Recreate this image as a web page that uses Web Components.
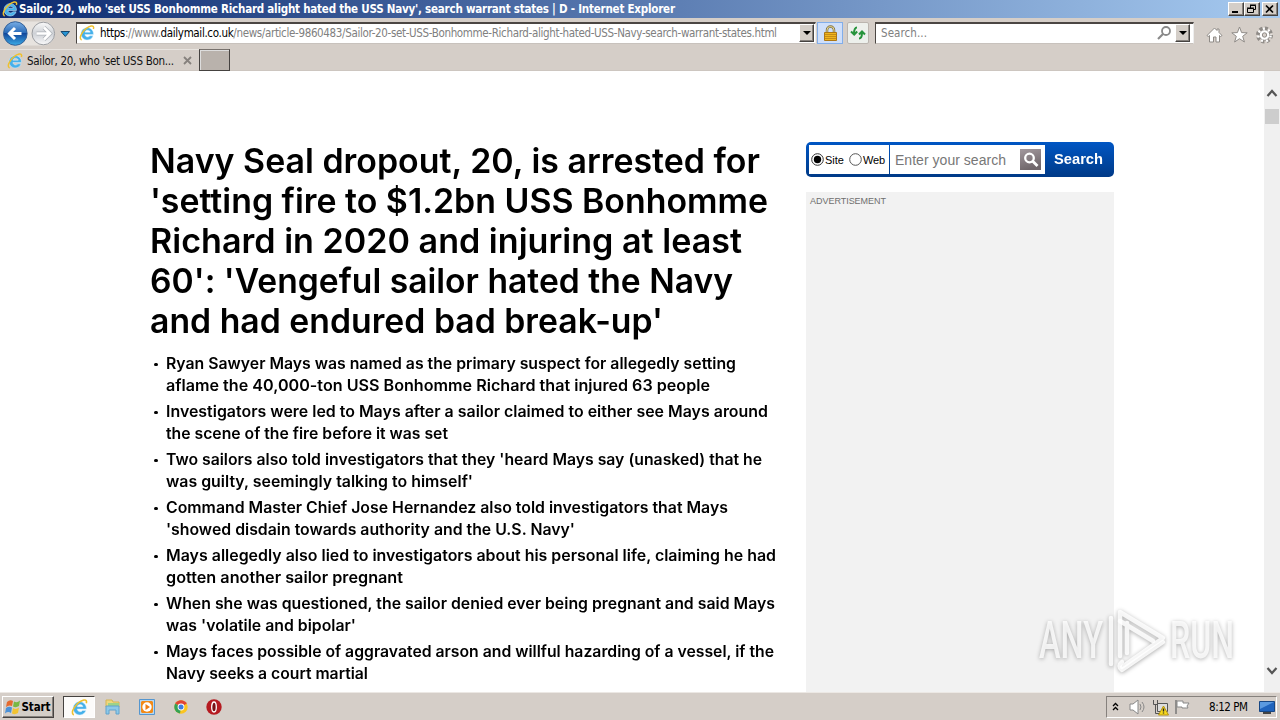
<!DOCTYPE html>
<html lang="en">
<head>
<meta charset="utf-8">
<title>Sailor, 20 - Internet Explorer</title>
<style>
html,body{margin:0;width:1280px;height:720px;overflow:hidden;background:#fff}
</style>
</head>
<body>
<ie-desktop></ie-desktop>
<script>
const UI = '"DejaVu Sans Condensed","DejaVu Sans",sans-serif';
function define(name, css, html, after) {
  const t = document.createElement('template');
  t.innerHTML = `<style>*{box-sizing:border-box}${css}</style>${html}`;
  customElements.define(name, class extends HTMLElement {
    constructor() {
      super();
      this.attachShadow({mode: 'open'}).append(t.content.cloneNode(true));
    }
    connectedCallback() { if (after) after(this); }
  });
}

/* one line of text tracked (or scaled) to a fixed measure */
define('fit-text', ':host{display:block;white-space:nowrap}span{display:inline-block;transform-origin:0 50%}', '<span><slot></slot></span>', el => {
  const s = el.shadowRoot.querySelector('span');
  const w = +el.getAttribute('w'), n = el.textContent.length;
  const nat = s.getBoundingClientRect().width;
  if (!w || !nat) return;
  if (el.hasAttribute('scale')) s.style.transform = `scaleX(${w / nat})`;
  else s.style.letterSpacing = ((w - nat) / (n - 1)) + 'px';
});

define('ie-logo', ':host{display:block;width:16px;height:16px}svg{display:block;width:100%;height:100%;overflow:visible}', `
<svg viewBox="0 0 16 16"><path fill-rule="evenodd" d="M14.4 9.500H5.900c.3 2.700 3.600 3.200 5 1.300h3.200A6.200 6.200 0 1 1 14.400 9.500zM6 7.200h5.200c-.4-2.600-4.700-2.700-5.200 0z" fill="#45b0ea" stroke="#d8effc" stroke-width=".5"/><path d="M2.600 15C-1.800 13 5.600 2.600 12.100 1c2.300-.4 3 1 2.300 3" fill="none" stroke="#efc02e" stroke-width="1.500"/></svg>`);

define('win-button', `:host{display:flex;align-items:center;justify-content:center;background:#d4cec8;border:1px solid;border-color:#fff #454240 #454240 #fff;box-shadow:inset -1px -1px #86817d}svg{display:block}`, '<slot></slot>');

define('title-bar', `:host{display:flex;height:18px;align-items:center;padding:0 2px 0 2px;background:linear-gradient(90deg,#0c2a70,#a6caf0);color:#fff;font:bold 11.500px/18px ${UI}}
ie-logo{margin-right:1px}fit-text{flex:1}.b{display:flex}win-button{width:16px;height:14px}.c{margin-left:2px}`, `
<ie-logo></ie-logo><fit-text w="656">Sailor, 20, who 'set USS Bonhomme Richard alight hated the USS Navy', search warrant states | D - Internet Explorer</fit-text>
<div class="b"><win-button><svg width="12" height="10"><path d="M2 8h6" stroke="#000" stroke-width="2"/></svg></win-button>
<win-button><svg width="12" height="10" fill="none" stroke="#000"><path d="M4 1h6M4 1.500h5.500v4H8M4.500 1v3M1.500 4.500h6v4h-6zM1 4h7"/></svg></win-button>
<win-button class="c"><svg width="12" height="10"><path d="M2 1.500l7 7M9 1.500l-7 7" stroke="#000" stroke-width="1.700"/></svg></win-button></div>`);

define('address-bar', `:host{display:flex;height:31px;padding:4px 0 0 3px;background:#d5cec8;font:11.500px/19px ${UI};color:#808080}
.nav{display:block;margin-top:-2px}.f{display:flex;height:22px;background:#fff;border:1px solid #eee;border-top:2px solid #4b4643;border-left:1px solid #4b4643;border-bottom-color:#c8c2bd}
.u{width:740px;margin-left:0}.u ie-logo{margin:1px 5px 0 2px}.u fit-text{flex:1}.f win-button{width:15px;height:18px}
.u win-button{margin-right:1px}b{font-weight:400;color:#000}.lock,.ref{display:grid;place-items:center;height:22px;margin-left:1px}
.lock{width:26px;background:#cfdffa;border:1px solid #82aeea}.ref{width:22px;margin-left:4px;background:#edf0ec;border:1px solid #bbb5af;border-radius:2px}
.s{width:319px;margin-left:6px;padding-left:5px}.s fit-text{flex:1}.s win-button{margin:0 3px 0 1px}.s>svg{margin-right:0;position:relative;left:-2px}.ico{display:flex;gap:8px;margin:4px 0 0 12px}`, `
<svg class="nav" width="73" height="28"><defs><linearGradient id="g" x2="0" y2="1"><stop stop-color="#78aee5"/><stop offset=".48" stop-color="#2869b7"/><stop offset=".5" stop-color="#12479b"/><stop offset="1" stop-color="#3bace7"/></linearGradient><linearGradient id="h" x2="0" y2="1"><stop stop-color="#fafafa"/><stop offset=".5" stop-color="#ced1d6"/><stop offset="1" stop-color="#f9f9fa"/></linearGradient></defs>
<path d="M12 1.500h28a12 12 0 0 1 0 24H12" fill="#e7e3df"/><circle cx="12.300" cy="13.500" r="11.800" fill="url(#g)" stroke="#315f98"/><circle cx="40.300" cy="13.500" r="11.300" fill="url(#h)" stroke="#9b9da1"/>
<path d="M18.500 13.500H8M12 8l-5.500 5.500L12 19" fill="none" stroke="#fff" stroke-width="3"/><path d="M33.500 13.500h12M41 7.500l6 6-6 6" fill="none" stroke="#aeb2b8" stroke-width="4"/><path d="M33.500 13.500h12M41 7.500l6 6-6 6" fill="none" stroke="#fff" stroke-width="2.600"/><path d="M58 11.500h8.500l-4.200 5z" fill="#2694d3" stroke="#16466d"/></svg>
<div class="f u"><ie-logo></ie-logo><fit-text w="677"><b>https</b>://www.<b>dailymail.co.uk</b>/news/article-9860483/Sailor-20-set-USS-Bonhomme-Richard-alight-hated-USS-Navy-search-warrant-states.html</fit-text><win-button><svg width="8" height="5"><path d="M0 0h8L4 4z"/></svg></win-button></div>
<div class="lock"><svg width="15" height="17"><path d="M4 8V5a3.500 3.500 0 0 1 7 0v3" fill="none" stroke="#7e7148" stroke-width="2.500"/><path d="M4 8V5a3.500 3.500 0 0 1 7 0v3" fill="none" stroke="#ead98d"/><path d="M1.500 7.500h12v8h-12z" fill="#f1b61d" stroke="#ad7714"/><path d="M2 9.500h11M2 11.500h11M2 13.500h11" stroke="#c68c17"/></svg></div>
<div class="ref"><svg width="16" height="14" fill="none" stroke="#26943c" stroke-width="2"><path d="M7 1.500Q4 1.500 4 8M1 5.500l3.200 3 3-3M9 12.500q3 0 3-6M9 8.500l3-3 3 3"/></svg></div>
<div class="f s"><fit-text w="46">Search...</fit-text><svg width="15" height="18"><circle cx="9" cy="7" r="4" fill="none" stroke="#898989" stroke-width="1.800"/><path d="M6 10l-5 5" stroke="#898989" stroke-width="2.200"/></svg><win-button><svg width="8" height="5"><path d="M0 0h8L4 4z"/></svg></win-button></div>
<div class="ico"><svg width="17" height="18" fill="#fff" stroke="#8f8b87"><path d="M1 9.500L8.500 2l2.500 2.500V3h2v3.500l3 3-1.500 1-1-1v6.500h-3.500v-5H7.500v5H3.500V9.500l-1.200 1z"/></svg>
<svg width="17" height="18" fill="#fff" stroke="#8f8b87"><path d="M8.500 1l2.100 5.600 5.600.2-4.500 3.500 1.700 5.700-4.900-3.300L3.600 16l1.700-5.700L.8 6.800l5.600-.2z"/></svg>
<svg width="17" height="18"><g transform="translate(8.500 9)"><circle r="6.700" fill="none" stroke="#8f8b87" stroke-width="3.600" stroke-dasharray="3.100 2.162"/><circle r="5.300" fill="#fff" stroke="#8f8b87"/><circle r="6.200" fill="none" stroke="#fff" stroke-width="2.400" stroke-dasharray="1.900 3.362" stroke-dashoffset="-.6"/><circle r="2.200" fill="#d5cec8" stroke="#8f8b87"/></g></svg></div>`);

define('tab-strip', `:host{display:flex;height:22px;background:#d5cec8;font:11.500px/22px ${UI};color:#111;border-bottom:1px solid #cdc6c0}
.t{display:flex;width:199px;padding:0 0 0 7px;border-top:1px solid #e8e4e0}ie-logo{margin:3px 4px 0 0}fit-text{width:156px}svg{margin-top:6px}.n{width:31px;height:22px;background:#b9b2ac;border:1px solid #454240;border-top-color:#77716d;box-shadow:inset 1px 1px #ddd}`, `
<div class="t"><ie-logo></ie-logo><fit-text w="147">Sailor, 20, who 'set USS Bon...</fit-text><svg width="9" height="9"><path d="M1 1l7 7M8 1l-7 7" stroke="#86817d" stroke-width="1.800"/></svg></div><div class="n"></div>`);

define('article-head', `:host{display:block;width:640px;color:#000;font-family:Inter,sans-serif;font-weight:600}h1{margin:0 0 12px;font-size:34px;line-height:40px;font-weight:600}
.p{font-size:15.500px;line-height:22px;margin-bottom:4px;padding-left:16px;position:relative}.p::before{content:"";position:absolute;left:4px;top:9.500px;width:3.500px;height:3.500px;border-radius:50%;background:#000}`, `
<h1><fit-text scale w="610">Navy Seal dropout, 20, is arrested for</fit-text><fit-text scale w="618">'setting fire to $1.2bn USS Bonhomme</fit-text><fit-text scale w="592">Richard in 2020 and injuring at least</fit-text><fit-text scale w="583">60': 'Vengeful sailor hated the Navy</fit-text><fit-text scale w="513">and had endured bad break-up'</fit-text></h1>
<div class="p"><fit-text scale w="570">Ryan Sawyer Mays was named as the primary suspect for allegedly setting</fit-text><fit-text scale w="544">aflame the 40,000-ton USS Bonhomme Richard that injured 63 people</fit-text></div>
<div class="p"><fit-text scale w="602">Investigators were led to Mays after a sailor claimed to either see Mays around</fit-text><fit-text scale w="282">the scene of the fire before it was set</fit-text></div>
<div class="p"><fit-text scale w="596">Two sailors also told investigators that they 'heard Mays say (unasked) that he</fit-text><fit-text scale w="307">was guilty, seemingly talking to himself'</fit-text></div>
<div class="p"><fit-text scale w="562">Command Master Chief Jose Hernandez also told investigators that Mays</fit-text><fit-text scale w="409">'showed disdain towards authority and the U.S. Navy'</fit-text></div>
<div class="p"><fit-text scale w="610">Mays allegedly also lied to investigators about his personal life, claiming he had</fit-text><fit-text scale w="237">gotten another sailor pregnant</fit-text></div>
<div class="p"><fit-text scale w="609">When she was questioned, the sailor denied ever being pregnant and said Mays</fit-text><fit-text scale w="190">was 'volatile and bipolar'</fit-text></div>
<div class="p"><fit-text scale w="608">Mays faces possible of aggravated arson and willful hazarding of a vessel, if the</fit-text><fit-text scale w="202">Navy seeks a court martial</fit-text></div>`);

define('site-search', `:host{display:flex;width:308px;height:35px;padding:3px;border-radius:5px;background:linear-gradient(#0056c4,#003a87);font-family:"Liberation Sans",Arial,sans-serif}
.r{display:flex;align-items:center;width:80px;background:#fff;padding-left:2px;font-size:11px;color:#000}.r svg{margin-right:1px}.r fit-text+svg{margin-left:5px}
.i{display:flex;align-items:center;width:155px;margin-left:1px;background:#fff;padding-left:5px;font-size:14px;color:#777}.i fit-text{width:125px}.b{color:#fff;font-weight:bold;font-size:15px;line-height:27px;padding-left:9px}`, `
<div class="r"><svg width="13" height="13"><circle cx="6.500" cy="6.500" r="5.800" fill="#fff" stroke="#333"/><circle cx="6.500" cy="6.500" r="3.700"/></svg><fit-text w="19">Site</fit-text><svg width="13" height="13"><circle cx="6.500" cy="6.500" r="5.800" fill="#fff" stroke="#555"/></svg><fit-text w="22">Web</fit-text></div>
<div class="i"><fit-text w="111">Enter your search</fit-text><svg width="21" height="21"><defs><linearGradient id="m" x2=".3" y2="1"><stop stop-color="#a3999e"/><stop offset="1" stop-color="#70676b"/></linearGradient></defs><path fill="url(#m)" d="M0 0h21v21H0z"/><circle cx="9.500" cy="9" r="4.300" fill="none" stroke="#fff" stroke-width="2.300"/><path d="M12.500 12l5 5" stroke="#fff" stroke-width="2.800"/></svg></div><fit-text class="b" scale w="49">Search</fit-text>`);

define('side-rail', `:host{display:block;width:308px}.ad{margin-top:15px;height:510px;background:#f2f2f2;padding:4px 4px;color:#6f6f6f;font:9px/11px "Liberation Sans",Arial,sans-serif}`, `
<site-search></site-search><div class="ad"><fit-text w="76">ADVERTISEMENT</fit-text></div>`);

define('scroll-bar', `:host{display:flex;flex-direction:column;width:16px;background:#f0f0f0}svg{display:block;margin-left:2px}.a{margin-top:18px}.t{width:14px;height:15px;margin:12px 0 0 1px;background:#cdcdcd}.d{margin-top:auto;margin-bottom:17px}`, `
<svg class="a" width="12" height="8"><path d="M1.500 7L6 2l4.500 5" fill="none" stroke="#555" stroke-width="2.200"/></svg><div class="t"></div><svg class="d" width="12" height="8"><path d="M1.500 1L6 6l4.500-5" fill="none" stroke="#555" stroke-width="2.200"/></svg>`);

define('any-run', `:host{position:absolute;left:1039px;top:608px;display:flex;color:rgba(255,255,255,.8);font:500 51px/65px Roboto,sans-serif;filter:drop-shadow(0 1px 2px rgba(0,0,0,.38))}.a{width:69px}.p{width:62px}.a,.r{height:66px}`, `
<fit-text class="a" scale w="64">ANY</fit-text><svg class="p" width="62" height="66"><g fill="none" stroke="#fff" stroke-opacity=".85" stroke-width="4.500" stroke-linejoin="round" stroke-linecap="round"><path d="M12 48V4l43 26-41 29"/><path d="M3 10v46M19 15v30M12 13l33 20M14 54q-5 4 0 8L55 34"/></g></svg><fit-text class="r" scale w="64">RUN</fit-text>`);

define('task-bar', `:host{display:flex;height:28px;padding:3px 3px 2px 2px;background:#d5cec8;border-top:1px solid #ece8e4;font:11.500px/21px ${UI};color:#000}
.st{width:52px;height:22px;font-weight:bold;gap:0}.st fit-text{width:30px}.q{display:flex;align-items:center;margin-left:9px}.on{display:grid;place-items:center;width:32px;height:22px;background:#fcfbfa;border:1px solid;border-color:#454240 #fff #fff #454240;margin-right:8px}.on ie-logo{width:17px;height:17px}
.q>svg{margin-right:14px}.q>svg:last-child{margin-left:-1px}.tr{display:flex;align-items:center;margin-left:auto;width:171px;height:22px;padding-left:5px;border:1px solid;border-color:#86817d #fff #fff #86817d}.tr svg{flex:none}`, `
<win-button class="st"><svg width="17" height="18"><path d="M2 4q3-3 6-1L7 8Q4 6.500 1 9z" fill="#e56a2e"/><path d="M9 3.500q3 2 6-1L14 8q-3 2-6 .5z" fill="#78b843"/><path d="M1 10q3-2 6-.5L6 15q-3-2-6 .5z" fill="#4b91d8"/><path d="M8 10q3 2 6-.5L13 15q-3 2-6 .5z" fill="#f2c331"/></svg><fit-text w="29">Start</fit-text></win-button>
<div class="q"><div class="on"><ie-logo></ie-logo></div>
<svg width="20" height="18"><path d="M3 2h6l1 2h6v5H3z" fill="#efd77c" stroke="#d5b553"/><path d="M5 5h11v3H5z" fill="#9cd389"/><path d="M3 8h13v8h-3v-4H6v4H3z" fill="#8cc9e9" stroke="#60a2cc"/></svg>
<svg width="20" height="18"><path d="M2.500 1.500h15v15h-15z" fill="#b4d7f3" stroke="#5596cf"/><path d="M5 3h10l1 1v10l-1 1H5l-1-1V4z" fill="#f28a18"/><circle cx="10" cy="9" r="4.700" fill="#fff"/><path d="M8.500 6l4.500 3-4.500 3z" fill="#ee7d14"/></svg>
<svg width="20" height="18"><circle cx="10" cy="9" r="6.700" fill="#fbc520"/><path d="M10 9L4.200 5.600A6.700 6.700 0 0 1 15.800 5.600z" fill="#e04436"/><path d="M10 9L4.200 5.600A6.700 6.700 0 0 0 9 15.600z" fill="#35a254"/><circle cx="10" cy="9" r="3.400" fill="#fff"/><circle cx="10" cy="9" r="2.500" fill="#3e7de0"/></svg>
<svg width="20" height="18"><circle cx="10" cy="9" r="7.700" fill="#b51a20"/><ellipse cx="10" cy="9" rx="2.300" ry="5" fill="#781014" stroke="#fff" stroke-width="1.300"/></svg></div>
<div class="tr"><svg width="7" height="10" fill="none" stroke="#000" stroke-width="1.300"><path d="M1 4l2.500-2.500L6 4M1 8l2.500-2.500L6 8"/></svg>
<svg width="18" height="16" style="margin-left:10px"><path d="M1 5h3l5-4v14l-5-4H1z" fill="#fff" stroke="#888"/><path d="M11 5q2 3 0 6M13 3q4 5 0 10" fill="none" stroke="#888"/></svg>
<svg width="17" height="17" style="margin-left:5px"><path d="M5.500 4.500h10v8h-10z" fill="#ddd" stroke="#555"/><path d="M1.500 1v4.500h4V1M3.500 5.500v9h5" fill="none" stroke="#555"/><path d="M11.500 7l5 9h-10z" fill="#f7d91c" stroke="#b49211"/><path d="M11.500 9.500v3M11.500 13.500v1" stroke="#222" stroke-width="1.400"/></svg>
<svg width="17" height="16" style="margin-left:5px"><path d="M2 1v14" stroke="#777" stroke-width="1.500"/><path d="M3 2h6v2h6l-2 3 1 2H8V8H3z" fill="#fff" stroke="#888"/></svg>
<fit-text w="39" style="margin-left:18px;width:50px">8:12 PM</fit-text><svg width="16" height="15"><path d="M.5 1.500h15v10H.5z" fill="#2064bd" stroke="#174784"/><path d="M1 2h14L1 9z" fill="#5b9ae0"/><path d="M4 13h8" stroke="#444" stroke-width="2"/></svg></div>`);

define('ie-desktop', `:host{display:flex;flex-direction:column;width:1280px;height:720px;position:relative;overflow:hidden}.m{display:flex;height:621px;background:#fff;overflow:hidden}
article-head{margin:70px 0 0 150px}side-rail{margin:71px 0 0 16px}scroll-bar{margin-left:auto}`, `
<title-bar></title-bar><address-bar></address-bar><tab-strip></tab-strip><div class="m"><article-head></article-head><side-rail></side-rail><scroll-bar></scroll-bar></div><task-bar></task-bar><any-run></any-run>`);

</script>
</body>
</html>
